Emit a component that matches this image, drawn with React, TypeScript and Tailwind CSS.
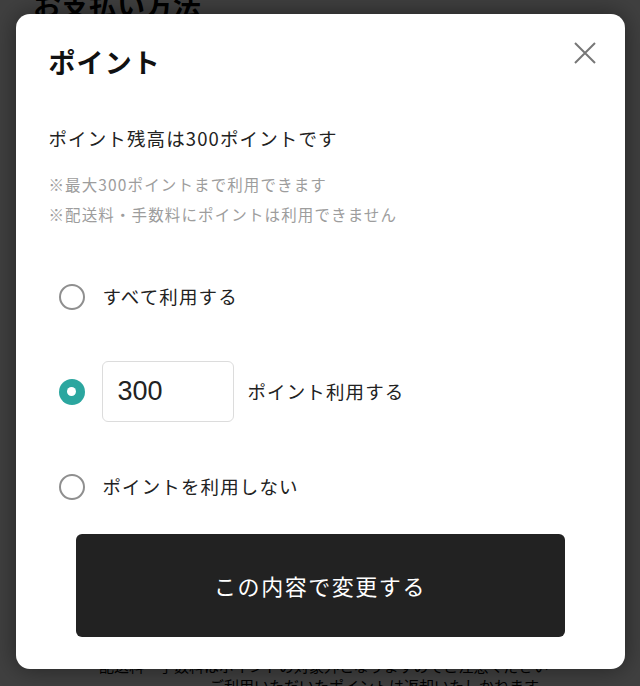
import { useState } from "react";

type Choice = "all" | "custom" | "none";

function Radio({ checked }: { checked: boolean }) {
  return checked ? (
    <span className="flex h-[26px] w-[26px] shrink-0 items-center justify-center rounded-full bg-[#2ba69f]">
      <span className="h-[9px] w-[9px] rounded-full bg-white" />
    </span>
  ) : (
    <span className="h-[26px] w-[26px] shrink-0 rounded-full border-2 border-[#8f8f8f] bg-white" />
  );
}

export default function App() {
  const [choice, setChoice] = useState<Choice>("custom");
  const [points, setPoints] = useState("300");

  return (
    <div className="relative h-[686px] w-[640px] overflow-hidden bg-white font-['Noto_Sans_CJK_JP',sans-serif] text-[#222]">
      {/* page behind the dialog */}
      <div className="flex h-full flex-col px-[33px]">
        <h2 className="-mt-[16px] text-[28px] font-bold leading-[40px] text-black">お支払い方法</h2>
        <div className="mt-auto flex flex-col pl-[66px] text-[15px] leading-[16px] text-black">
          <p className="translate-y-[4px]">配送料・手数料はポイントの対象外となりますのでご注意ください</p>
          <p className="translate-y-[8px] pl-[110px]">ご利用いただいたポイントは返却いたしかねます</p>
        </div>
      </div>

      <div className="absolute inset-0 flex justify-center bg-black/75 pt-[14px]">
        <div className="relative flex h-[655px] w-[609px] flex-col rounded-[14px] bg-white px-[33px] pb-[32px] pt-[30px] tracking-[0.07em] shadow-[0_0_24px_rgba(0,0,0,0.45)]">
          <h1 className="text-[27px] font-bold leading-[36px] text-[#111]">ポイント</h1>
          <button
            type="button"
            aria-label="閉じる"
            className="absolute right-[28px] top-[27px] flex h-[24px] w-[24px] items-center justify-center text-[#777]"
          >
            <svg viewBox="0 0 24 24" className="h-[24px] w-[24px]" fill="none" stroke="currentColor" strokeWidth={2}>
              <path d="M2 2l20 20M22 2L2 22" />
            </svg>
          </button>

          <p className="mt-[44px] text-[18.5px] leading-[28px]">ポイント残高は300ポイントです</p>
          <div className="mt-[17px] text-[15.5px] leading-[30px] text-[#9d9d9d]">
            <p>※最大300ポイントまで利用できます</p>
            <p>※配送料・手数料にポイントは利用できません</p>
          </div>

          <div className="mt-[37px] flex flex-col gap-[34px] pl-[10px] text-[18.5px]">
            <label className="flex h-[61px] items-center gap-[18px]" onClick={() => setChoice("all")}>
              <Radio checked={choice === "all"} />
              <span>すべて利用する</span>
            </label>
            <label className="flex h-[61px] items-center" onClick={() => setChoice("custom")}>
              <Radio checked={choice === "custom"} />
              <input
                value={points}
                onChange={(e) => setPoints(e.target.value)}
                className="ml-[17px] h-[61px] w-[132px] rounded-[6px] border-[1.5px] border-[#dcdcdc] px-[15px] font-['Liberation_Sans',sans-serif] text-[27px] tracking-normal text-[#222] outline-none"
              />
              <span className="ml-[14px]">ポイント利用する</span>
            </label>
            <label className="flex h-[61px] items-center gap-[18px]" onClick={() => setChoice("none")}>
              <Radio checked={choice === "none"} />
              <span>ポイントを利用しない</span>
            </label>
          </div>

          <button
            type="button"
            className="mx-[27px] mt-[17px] h-[104px] rounded-[6px] bg-[#222] text-[22px] font-normal tracking-[0.07em] text-white"
          >
            この内容で変更する
          </button>
        </div>
      </div>
    </div>
  );
}
